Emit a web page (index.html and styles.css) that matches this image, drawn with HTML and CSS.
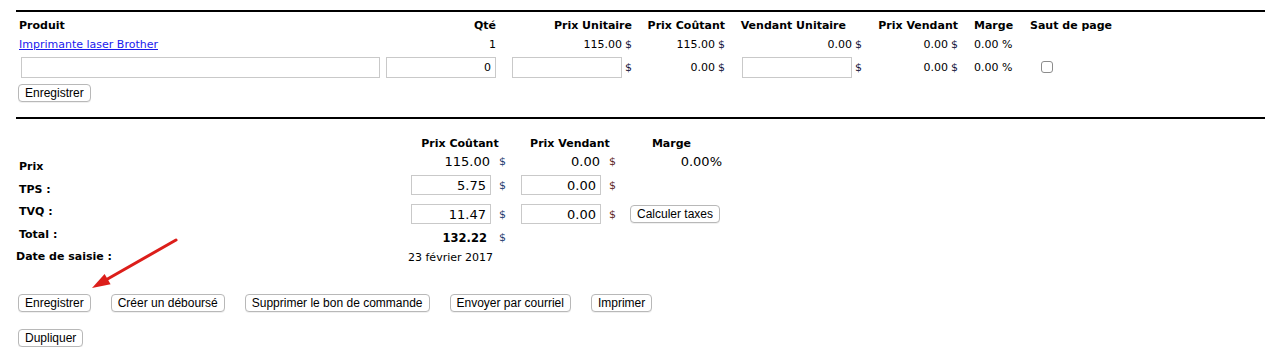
FILE: index.html
```html
<!DOCTYPE html>
<html lang="fr">
<head>
    <meta charset="UTF-8">
    <title>Bon de commande</title>
    <link rel="stylesheet" href="styles.css">
</head>
<body>

<div class="page">
    <div class="rule"></div>

    <div class="lines">
        <div class="cell head left">Produit</div>
        <div class="cell head">Qté</div>
        <div class="cell head">Prix Unitaire</div>
        <div class="cell head">Prix Coûtant</div>
        <div class="cell head vendu">Vendant Unitaire</div>
        <div class="cell head">Prix Vendant</div>
        <div class="cell head marge">Marge</div>
        <div class="cell head saut">Saut de page</div>

        <div class="cell left"><a href="#">Imprimante laser Brother</a></div>
        <div class="cell">1</div>
        <div class="cell">115.00 <span class="dol">$</span></div>
        <div class="cell">115.00 <span class="dol">$</span></div>
        <div class="cell">0.00 <span class="dol">$</span></div>
        <div class="cell">0.00 <span class="dol">$</span></div>
        <div class="cell marge">0.00 %</div>
        <div class="cell saut"></div>

        <div class="cell left"><input type="text" class="txt produit"></div>
        <div class="cell"><input type="text" class="txt qte" value="0"></div>
        <div class="cell"><input type="text" class="txt prix"> <span class="dol">$</span></div>
        <div class="cell">0.00 <span class="dol">$</span></div>
        <div class="cell"><input type="text" class="txt prix"> <span class="dol">$</span></div>
        <div class="cell">0.00 <span class="dol">$</span></div>
        <div class="cell marge">0.00 %</div>
        <div class="cell saut"><input type="checkbox" class="check"></div>
    </div>

    <div class="save-line">
        <button class="btn">Enregistrer</button>
    </div>

    <div class="rule"></div>

    <div class="totals">
        <div class="labels">
            <div class="label">Prix</div>
            <div class="label">TPS :</div>
            <div class="label">TVQ :</div>
            <div class="label">Total :</div>
            <div class="label date-label">Date de saisie :</div>
        </div>

        <div class="amounts">
            <div class="col-head span2">Prix Coûtant</div>
            <div class="col-head span2">Prix Vendant</div>
            <div class="col-head marge-head">Marge</div>

            <div class="amt">115.00</div>
            <div class="cur cout">$</div>
            <div class="amt">0.00</div>
            <div class="cur vend">$</div>
            <div class="amt marge-val">0.00%</div>

            <div class="amt"><input type="text" class="box" value="5.75"></div>
            <div class="cur cout">$</div>
            <div class="amt"><input type="text" class="box" value="0.00"></div>
            <div class="cur vend">$</div>
            <div></div>

            <div class="amt"><input type="text" class="box" value="11.47"></div>
            <div class="cur cout">$</div>
            <div class="amt"><input type="text" class="box" value="0.00"></div>
            <div class="cur vend">$</div>
            <div class="calc"><button class="btn">Calculer taxes</button></div>

            <div class="amt total">132.22</div>
            <div class="cur cout">$</div>
            <div></div>
            <div></div>
            <div></div>

            <div class="date">23 février 2017</div>
        </div>
    </div>

    <div class="actions">
        <button class="btn">Enregistrer</button>
        <button class="btn">Créer un déboursé</button>
        <button class="btn">Supprimer le bon de commande</button>
        <button class="btn">Envoyer par courriel</button>
        <button class="btn">Imprimer</button>
    </div>
    <div class="actions second">
        <button class="btn">Dupliquer</button>
    </div>
</div>

<svg class="arrow" width="1265" height="353" viewBox="0 0 1265 353">
    <line x1="176" y1="240" x2="104" y2="281" stroke="#dc1e1a" stroke-width="3" stroke-linecap="round"/>
    <polygon points="92,288 104.6,273.9 110.6,284.3" fill="#dc1e1a"/>
</svg>

</body>
</html>
```

FILE: styles.css
```css
* {
    box-sizing: border-box;
    margin: 0;
    padding: 0;
}
body {
    font-family: 'DejaVu Sans', Verdana, sans-serif;
    font-size: 11px;
    color: #000;
    background-color: #fff;
    position: relative;
}
.page {
    padding: 10px 0 0 16px;
}
.rule {
    border-top: 2px solid #000;
}
.lines {
    display: grid;
    grid-template-columns: 367px 116px 136px 93px 137px 96px 59px 113px;
    grid-template-rows: 21px 17px 28px;
    margin-top: 3px;
}
.cell {
    display: flex;
    align-items: center;
    justify-content: flex-end;
    padding: 0 3px;
    white-space: nowrap;
}
.cell.left {
    justify-content: flex-start;
}
.head {
    font-weight: bold;
}
.head.vendu {
    padding-right: 19px;
}
.cell.marge {
    justify-content: flex-start;
    padding-left: 13px;
}
.cell.saut {
    justify-content: flex-start;
    padding-left: 10px;
}
a {
    color: #1a1aee;
}
.dol {
    color: #14143c;
    margin-left: 3px;
}
.txt {
    height: 21px;
    border: 1px solid #c9c9c9;
    font-family: inherit;
    font-size: 11px;
    padding: 0 4px;
    outline: none;
}
.produit {
    width: 359px;
    margin-left: 2px;
}
.qte {
    width: 110px;
    text-align: right;
}
.prix {
    width: 110px;
}
.check {
    appearance: none;
    width: 12px;
    height: 12px;
    border: 1px solid #8c8c8c;
    border-radius: 3px;
    background: #fff;
    margin-left: 11px;
}
.save-line {
    padding: 3px 0 15px 2px;
}
.btn {
    font-family: 'Liberation Sans', Arial, sans-serif;
    font-size: 12px;
    color: #000;
    background-color: #fff;
    border: 1px solid #b8b8b8;
    border-radius: 4px;
    height: 18px;
    padding: 0 6px;
    box-shadow: 0 1px 0 rgba(0, 0, 0, 0.06);
}
.totals {
    display: flex;
    margin-top: 15px;
}
.labels {
    width: 389px;
    padding-top: 22px;
    font-weight: bold;
}
.label {
    height: 22.6px;
    line-height: 22.6px;
    padding-left: 3px;
}
.date-label {
    padding-left: 0;
}
.amounts {
    display: grid;
    grid-template-columns: 88px 22px 88px 22px 100px;
    grid-template-rows: 18px 19px 28px 30px 17px 22px;
    align-items: center;
}
.col-head {
    font-weight: bold;
    text-align: center;
}
.span2 {
    grid-column: span 2;
}
.marge-head {
    padding-right: 7px;
}
.amt {
    font-size: 13px;
    text-align: right;
    padding-right: 3px;
}
.amt:has(input) {
    padding-right: 2px;
}
.marge-val {
    padding-right: 3px;
}
.total {
    font-size: 11.5px;
    font-weight: bold;
    padding-right: 6px;
}
.cur {
    padding-left: 6px;
}
.cout {
    color: #233a6e;
}
.vend {
    color: #5e2525;
}
.box {
    width: 80px;
    height: 20px;
    border: 1px solid #c9c9c9;
    font-family: inherit;
    font-size: 13px;
    text-align: right;
    padding: 0 4px;
    outline: none;
}
.calc {
    padding-left: 5px;
}
.calc .btn {
    width: 90px;
    padding: 0;
}
.date {
    grid-column: 1 / span 5;
    padding-left: 3px;
}
.actions {
    display: flex;
    gap: 20px;
    margin-top: 25px;
    padding-left: 2px;
}
.actions.second {
    margin-top: 17px;
}
.arrow {
    position: absolute;
    top: 0;
    left: 0;
    pointer-events: none;
}
```
